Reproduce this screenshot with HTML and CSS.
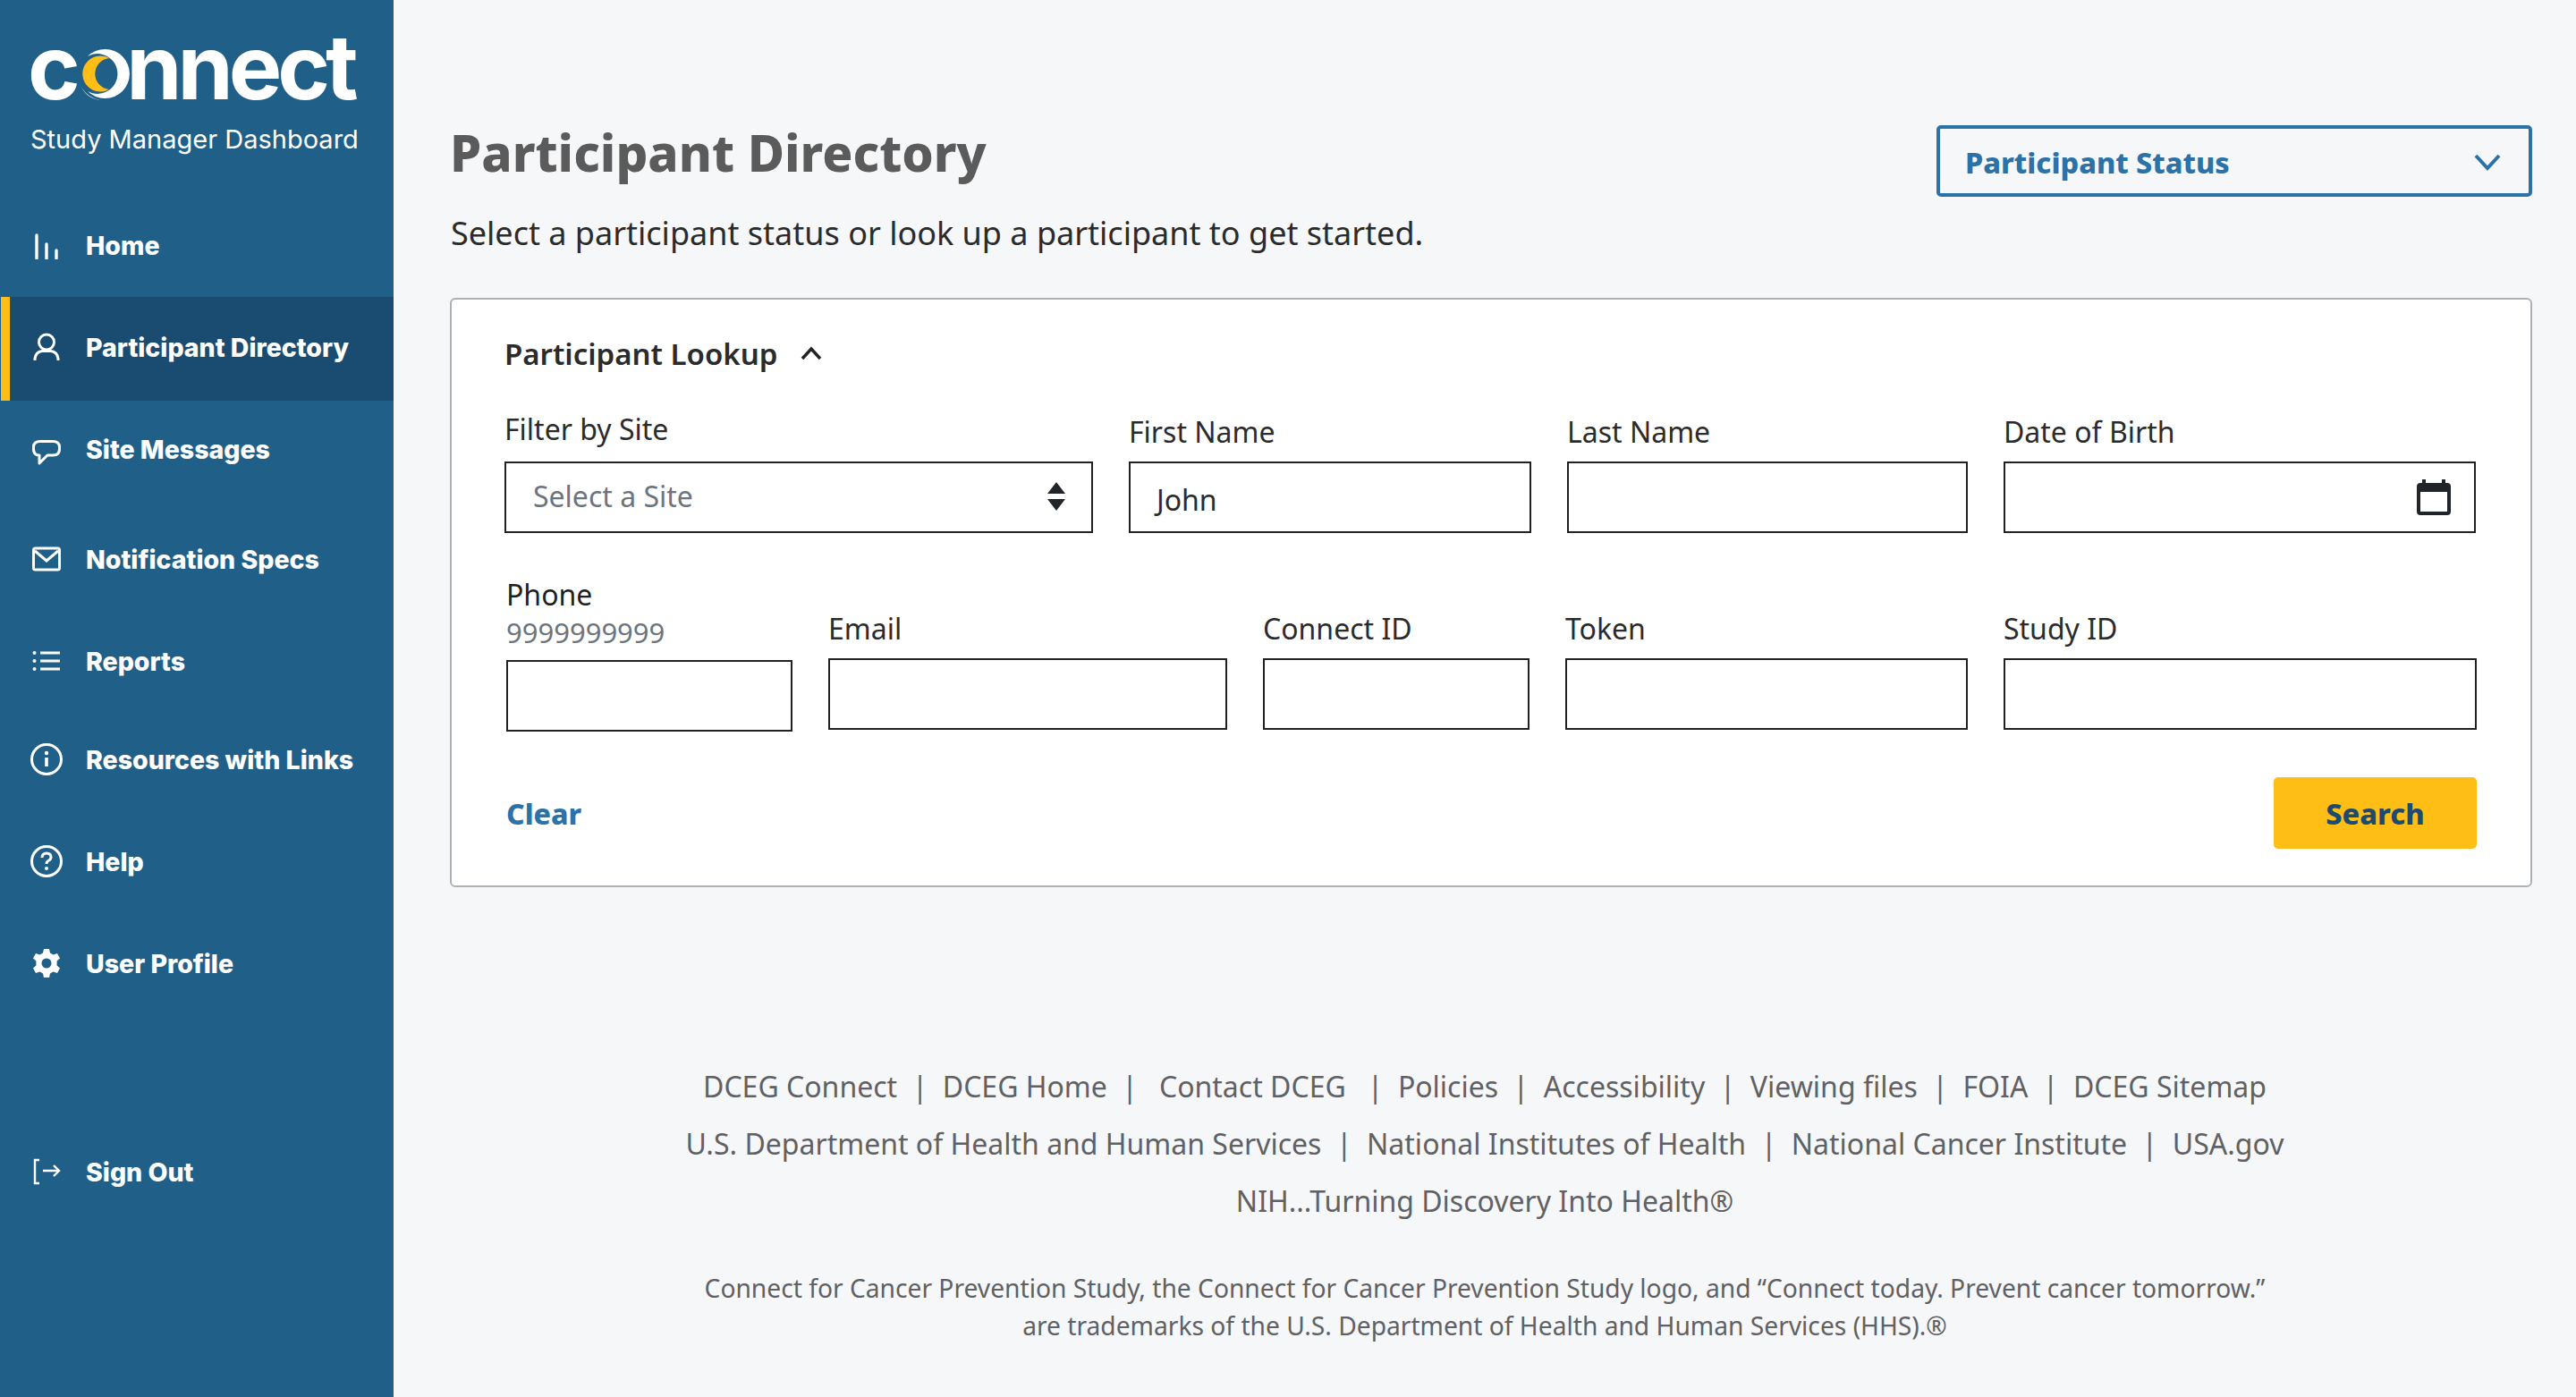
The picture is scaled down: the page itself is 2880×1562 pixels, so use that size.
FILE: index.html
```html
<!DOCTYPE html>
<html lang="en">
<head>
    <meta charset="UTF-8">
    <title>Participant Directory</title>
    <link rel="stylesheet" href="styles.css">
</head>
<body>
    <nav class="sidebar">
        <div class="brand">
            <div class="logo">connect
                <svg class="logo-moon" viewBox="0 0 66 66" width="66" height="66">
                    <circle cx="33" cy="32.500" r="30" fill="#1f5f88"/>
                    <path d="M14 13A27.500 27.500 0 1 1 14 52A22.400 22.400 0 1 0 14 13Z" fill="#fff"/>
                    <path d="M38 15A20 20 0 1 0 38 50A17.600 17.600 0 0 1 38 15Z" fill="#ffbe16"/>
                </svg>
            </div>
            <div class="brand-sub">Study Manager Dashboard</div>
        </div>
        <ul class="nav-list">
            <li class="nav-item row-home">
                <svg class="nav-icon" viewBox="0 0 32 32"><path d="M5 5V31M16 15V31M27 22V31" stroke="#fff" stroke-width="3.400" stroke-linecap="round" fill="none"/></svg>
                Home
            </li>
            <li class="nav-item row-directory active">
                <svg class="nav-icon" viewBox="0 0 32 32"><circle cx="16" cy="10.500" r="8.500" stroke="#fff" stroke-width="3" fill="none"/><path d="M3 31V29Q4 21.500 11 20.500H21Q28 21.500 29 29V31" stroke="#fff" stroke-width="3" fill="none"/></svg>
                Participant Directory
            </li>
            <li class="nav-item row-messages">
                <svg class="nav-icon icon-bubble" viewBox="0 0 32 32"><path d="M9 1.500H23Q30.500 1.500 30.500 8V10Q30.500 17 23 17H17L8 26V17Q1.500 17 1.500 10V8Q1.500 1.500 9 1.500Z" stroke="#fff" stroke-width="3" stroke-linejoin="round" fill="none"/></svg>
                Site Messages
            </li>
            <li class="nav-item row-specs">
                <svg class="nav-icon" viewBox="0 0 32 32"><rect x="1.500" y="4" width="29" height="24" rx="2" stroke="#fff" stroke-width="3" fill="none"/><path d="M3 7L16 18L29 7" stroke="#fff" stroke-width="3" fill="none"/></svg>
                Notification Specs
            </li>
            <li class="nav-item row-reports">
                <svg class="nav-icon" viewBox="0 0 32 32"><path d="M9 7H31M9 16H31M9 25H31" stroke="#fff" stroke-width="3" fill="none"/><circle cx="2.500" cy="7" r="2" fill="#fff"/><circle cx="2.500" cy="16" r="2" fill="#fff"/><circle cx="2.500" cy="25" r="2" fill="#fff"/></svg>
                Reports
            </li>
            <li class="nav-item row-resources">
                <svg class="nav-icon icon-wide" viewBox="0 0 36 36"><circle cx="18" cy="18" r="16.500" stroke="#fff" stroke-width="3" fill="none"/><circle cx="18" cy="11" r="2.200" fill="#fff"/><path d="M18 16V26" stroke="#fff" stroke-width="3.600" fill="none"/></svg>
                Resources with Links
            </li>
            <li class="nav-item row-help">
                <svg class="nav-icon icon-wide" viewBox="0 0 36 36"><circle cx="18" cy="18" r="16.500" stroke="#fff" stroke-width="3" fill="none"/><path d="M13 14Q13 9 18 9Q23 9 23 13.500Q23 16 20 17.500Q18 18.500 18 21" stroke="#fff" stroke-width="3" fill="none"/><circle cx="18" cy="26" r="2" fill="#fff"/></svg>
                Help
            </li>
            <li class="nav-item row-profile">
                <svg class="nav-icon" viewBox="0 0 32 32"><path fill="#fff" fill-rule="evenodd" d="M13 0H19L20 4.500L23.500 6.500L28 5L31 10.500L27.600 13.600V18.400L31 21.500L28 27L23.500 25.500L20 27.500L19 32H13L12 27.500L8.500 25.500L4 27L1 21.500L4.400 18.400V13.600L1 10.500L4 5L8.500 6.500L12 4.500ZM16 10.500A5.500 5.500 0 1 0 16 21.500A5.500 5.500 0 1 0 16 10.500Z"/></svg>
                User Profile
            </li>
            <li class="nav-item row-signout">
                <svg class="nav-icon" viewBox="0 0 32 32"><path d="M8 3H3V29H8" stroke="#fff" stroke-width="2.400" fill="none"/><path d="M12 15H30M24 9L30 15L24 21" stroke="#fff" stroke-width="2.400" fill="none"/></svg>
                Sign Out
            </li>
        </ul>
    </nav>

    <main class="main">
        <div class="page-head">
            <div>
                <h1 class="page-title">Participant Directory</h1>
                <p class="page-intro">Select a participant status or look up a participant to get started.</p>
            </div>
            <div class="status-select">
                Participant Status
                <svg class="status-chevron" viewBox="0 0 30 20" width="30" height="20"><path d="M2 3L15 17L28 3" stroke="#2a72a8" stroke-width="4" fill="none"/></svg>
            </div>
        </div>

        <section class="lookup-card">
            <div class="lookup-title">
                Participant Lookup
                <svg viewBox="0 0 24 16" width="24" height="16"><path d="M2 14L12 3L22 14" stroke="#222" stroke-width="3.500" fill="none"/></svg>
            </div>

            <div class="form-row row-one">
                <div class="field field-site">
                    <label>Filter by Site</label>
                    <div class="input select-box">
                        <span class="placeholder">Select a Site</span>
                        <svg viewBox="0 0 22 32" width="22" height="32"><path d="M11 0L21 13H1ZM11 32L1 19H21Z" fill="#212529"/></svg>
                    </div>
                </div>
                <div class="field">
                    <label>First Name</label>
                    <div class="input input-value">John</div>
                </div>
                <div class="field">
                    <label>Last Name</label>
                    <div class="input"></div>
                </div>
                <div class="field">
                    <label>Date of Birth</label>
                    <div class="input date-box">
                        <svg viewBox="0 0 38 40" width="38" height="40"><path d="M6 0H10V4H28V0H32V4H34Q38 4 38 8V36Q38 40 34 40H4Q0 40 0 36V8Q0 4 4 4H6ZM4 14V36H34V14Z" fill="#212529" fill-rule="evenodd"/></svg>
                    </div>
                </div>
            </div>

            <div class="form-row row-two">
                <div class="field field-phone">
                    <label>Phone</label>
                    <div class="phone-hint">9999999999</div>
                    <div class="input"></div>
                </div>
                <div class="field">
                    <label>Email</label>
                    <div class="input"></div>
                </div>
                <div class="field">
                    <label>Connect ID</label>
                    <div class="input"></div>
                </div>
                <div class="field">
                    <label>Token</label>
                    <div class="input"></div>
                </div>
                <div class="field">
                    <label>Study ID</label>
                    <div class="input"></div>
                </div>
            </div>

            <div class="form-actions">
                <a class="clear-link">Clear</a>
                <button class="search-button">Search</button>
            </div>
        </section>

        <footer class="site-footer">
            <div class="footer-line">
                <a>DCEG Connect</a><i>|</i><a>DCEG Home</a><i class="wide">|</i><a>Contact DCEG</a><i class="wide-left">|</i><a>Policies</a><i>|</i><a>Accessibility</a><i>|</i><a>Viewing files</a><i>|</i><a>FOIA</a><i>|</i><a>DCEG Sitemap</a>
            </div>
            <div class="footer-line">
                <a>U.S. Department of Health and Human Services</a><i>|</i><a>National Institutes of Health</a><i>|</i><a>National Cancer Institute</a><i>|</i><a>USA.gov</a>
            </div>
            <div class="footer-line">NIH...Turning Discovery Into Health®</div>
            <p class="footer-note">Connect for Cancer Prevention Study, the Connect for Cancer Prevention Study logo, and “Connect today. Prevent cancer tomorrow.”<br>are trademarks of the U.S. Department of Health and Human Services (HHS).®</p>
        </footer>
    </main>
</body>
</html>
```

FILE: styles.css
```css
* {
    box-sizing: border-box;
}
body {
    margin: 0;
    width: 2880px;
    height: 1562px;
    display: flex;
    overflow: hidden;
    background-color: #f6f7f9;
    font-family: "Noto Sans", Arial, sans-serif;
    color: #2b2b2b;
}

/* sidebar */
.sidebar {
    width: 440px;
    flex-shrink: 0;
    background-color: #1f5f88;
    color: #fff;
}
.brand {
    padding: 20px 0 0 31px;
    height: 216px;
}
.logo {
    position: relative;
    font-family: Inter, Arial, sans-serif;
    font-weight: 700;
    font-size: 100px;
    line-height: 110px;
    letter-spacing: -5px;
    width: 380px;
}
.logo-moon {
    position: absolute;
    top: 30px;
    left: 53px;
}
.brand-sub {
    font-family: Inter, Arial, sans-serif;
    font-size: 29px;
    line-height: 34px;
    margin: 9px 0 0 3px;
    white-space: nowrap;
}
.nav-list {
    list-style: none;
    margin: 0;
    padding: 0;
}
.nav-item {
    display: flex;
    align-items: center;
    gap: 28px;
    padding-left: 36px;
    font-family: Inter, Arial, sans-serif;
    font-weight: 800;
    font-size: 28.5px;
    height: 116px;
    white-space: nowrap;
}
.nav-icon {
    width: 32px;
    height: 32px;
    flex-shrink: 0;
}
.icon-wide {
    width: 36px;
    height: 36px;
    margin-left: -2px;
    margin-right: -2px;
}
.icon-bubble {
    margin-top: 11px;
}
.row-directory {
    padding-bottom: 4px;
}
.row-messages {
    height: 108px;
}
.row-specs {
    height: 138px;
}
.row-reports {
    height: 90px;
}
.row-resources {
    height: 130px;
}
.row-help {
    height: 98px;
}
.row-profile {
    height: 130px;
}
.row-signout {
    height: 120px;
    margin-top: 108px;
}
.nav-item.active {
    margin-left: 1px;
    background-color: #1a4b70;
    border-left: 10px solid #ffbe16;
    padding-left: 25px;
}

/* main area */
.main {
    flex-grow: 1;
    padding: 0 49px 0 63px;
}
.page-head {
    display: flex;
    justify-content: space-between;
    align-items: flex-start;
    height: 333px;
    padding-top: 132px;
}
.page-title {
    margin: 0;
    font-size: 56.4px;
    font-weight: 800;
    line-height: 78px;
    color: #5b5b5b;
}
.page-intro {
    margin: 26px 0 0 1px;
    font-size: 36px;
    line-height: 50px;
    color: #2b2b2b;
}
.status-select {
    width: 666px;
    height: 80px;
    margin-top: 8px;
    border: 4px solid #2a72a8;
    border-radius: 5px;
    padding: 2px 31px 0 28px;
    display: flex;
    align-items: center;
    justify-content: space-between;
    font-size: 32.4px;
    font-weight: 800;
    color: #2a72a8;
}

/* lookup card */
.lookup-card {
    height: 659px;
    background-color: #fff;
    border: 2px solid #adb1b5;
    border-radius: 6px;
    padding: 0 60px;
}
.lookup-title {
    display: flex;
    align-items: center;
    gap: 26px;
    height: 66px;
    margin: 27px 0 0 -1px;
    font-size: 33px;
    font-weight: 600;
    color: #2b2b2b;
}
.form-row {
    display: grid;
    column-gap: 40px;
    align-items: end;
}
.row-one {
    grid-template-columns: 658px 450px 448px 528px;
    margin-top: 31px;
    margin-left: -1px;
    width: 2204px;
}
.row-two {
    grid-template-columns: 320px 446px 298px 450px 529px;
    margin-top: 47px;
    margin-left: 1px;
    margin-right: -1px;
}
.field label {
    display: block;
    font-size: 32px;
    line-height: 44px;
    margin-bottom: 11px;
    color: #2b2b2b;
}
.field-site label {
    margin-bottom: 14px;
    margin-top: -1px;
}
.field-phone {
    margin-bottom: -2px;
}
.field-phone label {
    margin-bottom: 0;
    color: #1f1f1f;
}
.phone-hint {
    font-size: 31px;
    line-height: 40px;
    color: #6c757d;
    margin-bottom: 11px;
}
.input {
    height: 80px;
    border: 2px solid #212121;
    background-color: #fff;
    font-size: 32px;
    display: flex;
    align-items: center;
}
.input-value {
    padding-left: 29px;
    padding-top: 4px;
    color: #2b2b2b;
}
.select-box {
    justify-content: space-between;
    padding: 0 28px 4px 30px;
}
.select-box svg {
    margin-top: 1px;
}
.placeholder {
    color: #6c757d;
}
.date-box {
    justify-content: flex-end;
    padding-right: 26px;
}
.form-actions {
    display: flex;
    justify-content: space-between;
    align-items: center;
    margin: 53px 0 0 1px;
}
.clear-link {
    font-size: 32px;
    font-weight: 800;
    color: #2a72a8;
}
.search-button {
    width: 227px;
    height: 80px;
    background-color: #ffbe16;
    border: none;
    border-radius: 5px;
    font-family: "Noto Sans", Arial, sans-serif;
    font-size: 32.5px;
    font-weight: 800;
    color: #1c4b6f;
}

/* footer */
.site-footer {
    margin-top: 191px;
    text-align: center;
    color: #5f6164;
    font-size: 32px;
    margin-left: -14px;
}
.footer-line {
    height: 64px;
    line-height: 64px;
    white-space: nowrap;
}
.footer-line i {
    font-style: normal;
    margin: 0 16.5px;
}
.footer-line i.wide {
    margin-right: 24px;
}
.footer-line i.wide-left {
    margin-left: 24px;
}
.footer-note {
    margin: 44px 0 0;
    font-size: 28.2px;
    line-height: 42px;
}
```
